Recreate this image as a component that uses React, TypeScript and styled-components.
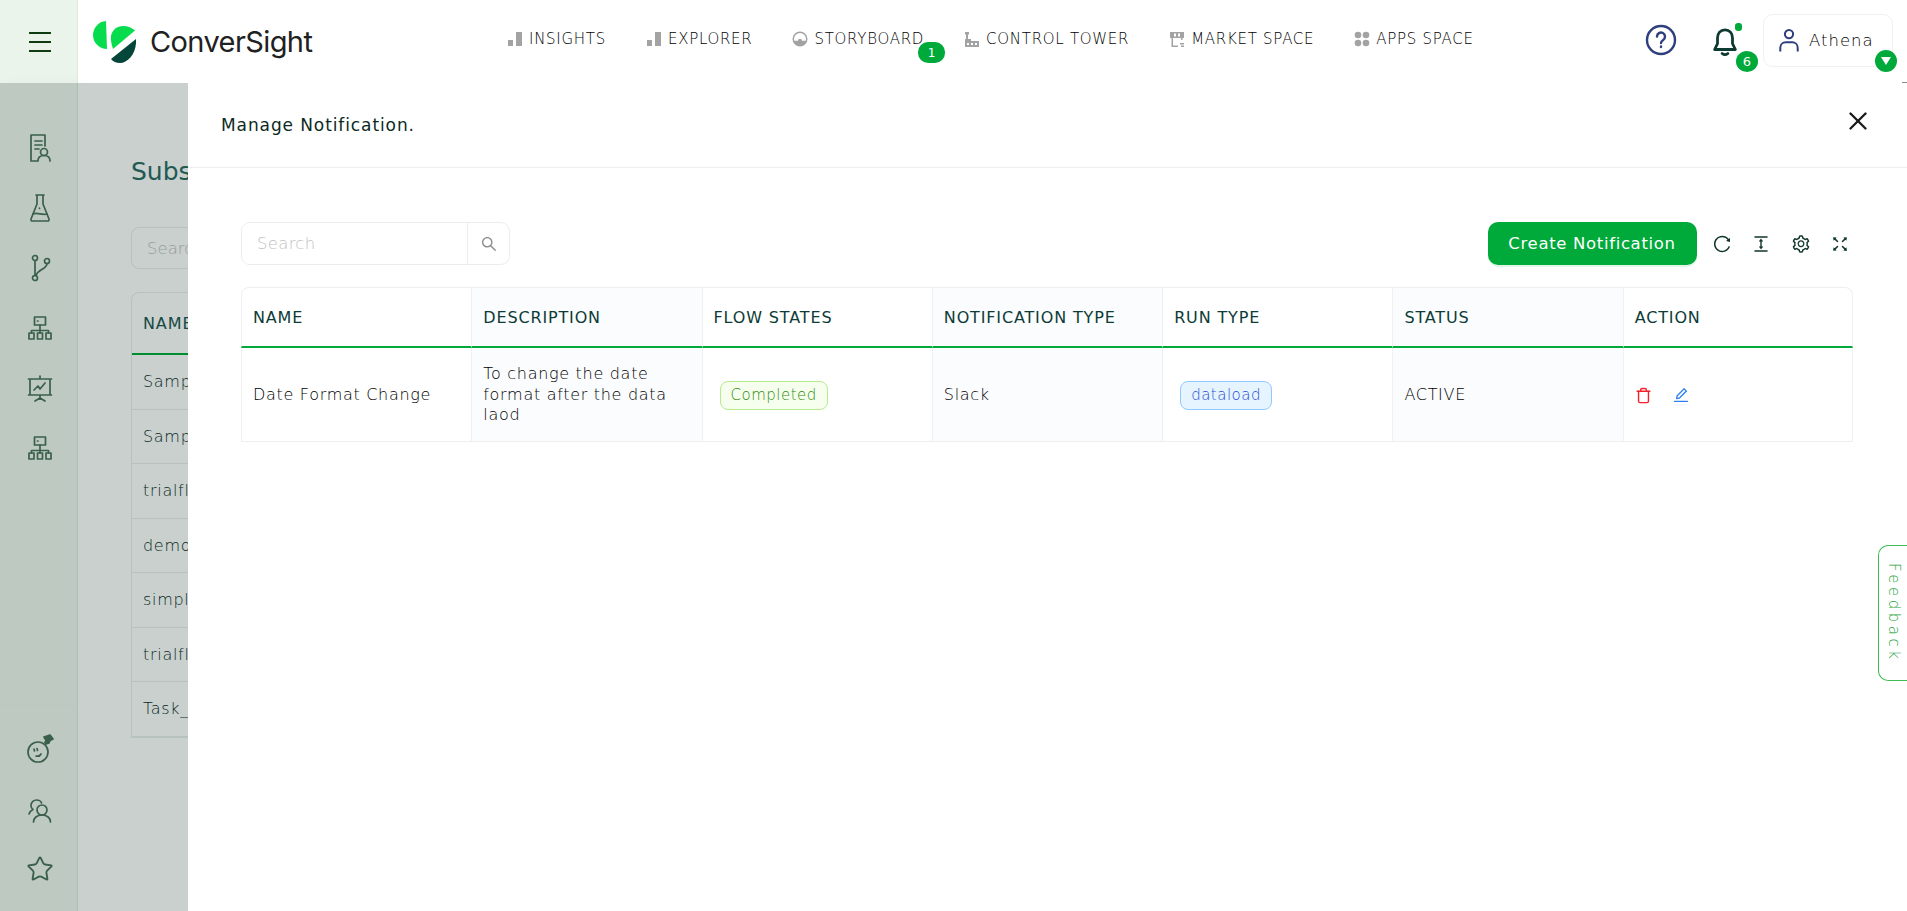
import React from "react";
import styled, { createGlobalStyle } from "styled-components";
import { AiOutlineReload, AiOutlineColumnHeight, AiOutlineSetting, AiOutlineFullscreen, AiOutlineSearch, AiOutlineEdit } from "react-icons/ai";
import { Trash, X, Star } from "lucide-react";

const GlobalStyle = createGlobalStyle`
  html, body {
    margin: 0;
    height: 100%;
    background: #fff;
    font-family: "DejaVu Sans", Inter, sans-serif;
    color: #0d3b36;
  }
  #root { height: 100%; }
  * { box-sizing: border-box; }
`;

const navItems = [
  { label: "INSIGHTS", icon: "bars" },
  { label: "EXPLORER", icon: "bars" },
  { label: "STORYBOARD", icon: "gauge", badge: "1" },
  { label: "CONTROL TOWER", icon: "tower" },
  { label: "MARKET SPACE", icon: "market" },
  { label: "APPS SPACE", icon: "apps" },
];

const columns = ["NAME", "DESCRIPTION", "FLOW STATES", "NOTIFICATION TYPE", "RUN TYPE", "STATUS", "ACTION"];
const backRows = ["Sample_flow", "Sample_flow_2", "trialflow", "demo_flow", "simple_flow", "trialflow_2", "Task_flow"];

const NavGlyph = ({ icon }: { icon: string }) => {
  if (icon === "bars") {
    return (
      <NavSvg viewBox="0 0 16 16">
        <rect x="1" y="9" width="5" height="6" />
        <rect x="9" y="1" width="6" height="14" />
      </NavSvg>
    );
  }
  if (icon === "gauge") {
    return (
      <NavSvg viewBox="0 0 16 16">
        <path fillRule="evenodd" d="M8 0.5a7.5 7.5 0 1 0 0 15a7.5 7.5 0 0 0 0-15zM8 2a6 6 0 0 1 6 6c0 .6-.1 1.2-.3 1.7H10a2 2 0 0 0-4 0H2.3A6 6 0 0 1 2 8a6 6 0 0 1 6-6z" />
      </NavSvg>
    );
  }
  if (icon === "tower") {
    return (
      <NavSvg viewBox="0 0 16 16">
        <path d="M1 1h4v2.5H4V8h3v2h8v6H1V8h1V3.500H1z" />
        <rect x="3" y="12" width="2" height="2" fill="#fff" />
        <rect x="7" y="12" width="2" height="2" fill="#fff" />
        <rect x="11" y="12" width="2" height="2" fill="#fff" />
      </NavSvg>
    );
  }
  if (icon === "market") {
    return (
      <NavSvg viewBox="0 0 16 16">
        <path d="M1 1h14v6h-1.500v2H12V7H4v7.500h5V16H2.500V7H1zM5 2.500v3h2v-3zM9 2.500v3h2v-3z" fillRule="evenodd" />
        <rect x="11" y="12" width="4" height="1.500" />
        <rect x="12" y="14.500" width="3" height="1.500" />
      </NavSvg>
    );
  }
  return (
    <NavSvg viewBox="0 0 16 16">
      <circle cx="4" cy="4" r="3.300" />
      <circle cx="12" cy="4" r="3.300" />
      <circle cx="4" cy="12" r="3.300" />
      <circle cx="12" cy="12" r="3.300" />
    </NavSvg>
  );
};

const Logo = () => (
  <LogoMark viewBox="0 0 46 44">
    <path d="M16 1 A14.020 14.020 0 0 0 17 29 Z" fill="#07dc4f" />
    <path d="M21 16 C22 10 27 6 33 6 C38 6 42 8 45 10.500 L23 29 C21.500 24 20.500 20 21 16 Z" fill="#07dc4f" />
    <path d="M46 19 C47 33 38 43 30 43 C26 43 23 41.500 21 39 Z" fill="#04473a" />
  </LogoMark>
);

const App = () => {
  return (
    <Page>
      <GlobalStyle />
      <TopBar>
        <BurgerCell>
          <BurgerLine />
          <BurgerLine />
          <BurgerLine />
        </BurgerCell>
        <LogoBox>
          <Logo />
          <LogoText>ConverSight</LogoText>
        </LogoBox>
        <Nav>
          {navItems.map((item) => (
            <NavItem key={item.label}>
              <NavGlyph icon={item.icon} />
              <NavLabel>{item.label}</NavLabel>
              {item.badge && <NavBadge>{item.badge}</NavBadge>}
            </NavItem>
          ))}
        </Nav>
        <RightGroup>
          <HelpSvg viewBox="0 0 32 32">
            <circle cx="16" cy="16" r="14" />
            <path d="M12 12.500a4 4 0 1 1 6.200 3.400c-1.400.9-2.200 1.700-2.200 3.100" />
            <path d="M16 22.500v.5" />
          </HelpSvg>
          <BellBox>
            <BellSvg viewBox="0 0 24 26">
              <path d="M12 2.500c-4 0-6.500 3-6.500 7v5L3 19.500h18l-2.500-5v-5c0-4-2.500-7-6.500-7z" />
              <path d="M9.500 23c1.500 1.200 3.500 1.200 5 0" />
            </BellSvg>
            <BellDot />
            <BellBadge>6</BellBadge>
          </BellBox>
          <UserBox>
            <UserSvg viewBox="0 0 24 28">
              <circle cx="12" cy="7" r="4.500" />
              <path d="M2.500 26v-4c0-3.500 2.500-6 6-6h7c3.500 0 6 2.500 6 6v4" />
            </UserSvg>
            <UserName>Athena</UserName>
            <UserCaret>
              <CaretTriangle />
            </UserCaret>
          </UserBox>
        </RightGroup>
      </TopBar>

      <Body>
        <Sidebar>
          <SideGroup>
            <SideSvg viewBox="0 0 24 30">
              <path d="M17 13V2H3v26h6" />
              <path d="M7 8h7M7 12h7M7 16h4" />
              <circle cx="16" cy="19" r="3.500" />
              <path d="M10 28c0-3.500 2.500-5.500 6-5.500s6 2 6 5.500" />
            </SideSvg>
            <SideSvg viewBox="0 0 24 30">
              <path d="M8 2h8M9 2v9L3 26a1.500 1.500 0 0 0 1.500 2h15a1.500 1.500 0 0 0 1.500-2l-6-15V2" />
              <path d="M5 21c4-2 9 1.500 14 0" />
              <path d="M11.500 15v.5" />
            </SideSvg>
            <SideSvg viewBox="0 0 24 30">
              <circle cx="7" cy="5" r="2.500" />
              <circle cx="7" cy="25" r="2.500" />
              <circle cx="19" cy="8" r="2.500" />
              <path d="M7 7.500v15M19 10.500c0 6-9 5-11 12" />
            </SideSvg>
            <NetworkIcon />
            <SideSvg viewBox="0 0 30 30">
              <path d="M15 3v3M3.500 6h23M5 6v16h20V6H5zM3.500 22h23M15 22v3M10 28l5-3 5 3" />
              <path d="M9 17l4-4 2 3 5-6" />
            </SideSvg>
            <NetworkIcon />
          </SideGroup>
          <SideGroupBottom>
            <SideSvg viewBox="0 0 30 30">
              <circle cx="13" cy="18" r="10" />
              <path d="M9 15l.5 2M12 14.500l.5 2M11 22c2 .5 4 0 5-2" />
              <path d="M19 3l6-2 3 4-6 3z" fill="currentColor" />
              <path d="M20 8l5-2-1 3-3 1z" fill="currentColor" />
            </SideSvg>
            <SideSvg viewBox="0 0 30 30">
              <path d="M4 20c.5-2 2-3.500 4-4.500-1.500-1-2-2.500-2-4C6 8 9 6 11.500 6 14 6 16 7.500 16.500 9" />
              <circle cx="17" cy="16" r="5" />
              <path d="M8.500 28c0-4 3.500-7 8.500-7s8.500 3 8.500 7" />
            </SideSvg>
            <SideStar as={Star} />
          </SideGroupBottom>
        </Sidebar>

        <Main>
          <BackTitle>Subscriptions</BackTitle>
          <BackSearch>Search</BackSearch>
          <BackTable>
            <BackHead>NAME</BackHead>
            {backRows.map((row) => (
              <BackRow key={row}>{row}</BackRow>
            ))}
          </BackTable>
        </Main>
      </Body>

      <Overlay />

      <Drawer>
        <DrawerHeader>
          <DrawerTitle>Manage Notification.</DrawerTitle>
          <CloseButton>
            <X size={30} strokeWidth={1.9} />
          </CloseButton>
        </DrawerHeader>
        <DrawerBody>
          <Toolbar>
            <SearchBox>
              <SearchInput placeholder="Search" />
              <SearchAddon>
                <AiOutlineSearch size={18} />
              </SearchAddon>
            </SearchBox>
            <ToolActions>
              <CreateButton>Create Notification</CreateButton>
              <ToolIcons>
                <AiOutlineReload size={20} />
                <AiOutlineColumnHeight size={20} />
                <AiOutlineSetting size={20} />
                <AiOutlineFullscreen size={20} />
              </ToolIcons>
            </ToolActions>
          </Toolbar>
          <Table>
            <thead>
              <tr>
                {columns.map((col) => (
                  <HeadCell key={col}>{col}</HeadCell>
                ))}
              </tr>
            </thead>
            <tbody>
              <tr>
                <BodyCell>Date Format Change</BodyCell>
                <BodyCell>To change the date format after the data laod</BodyCell>
                <BodyCell>
                  <Tag $kind="green">Completed</Tag>
                </BodyCell>
                <BodyCell>Slack</BodyCell>
                <BodyCell>
                  <Tag $kind="blue">dataload</Tag>
                </BodyCell>
                <BodyCell>ACTIVE</BodyCell>
                <BodyCell>
                  <ActionRow>
                    <TrashIcon as={Trash} />
                    <EditIcon as={AiOutlineEdit} />
                  </ActionRow>
                </BodyCell>
              </tr>
            </tbody>
          </Table>
        </DrawerBody>
      </Drawer>

      <Feedback>Feedback</Feedback>
      <CornerDash />
    </Page>
  );
};

const NetworkIcon = () => (
  <SideSvg viewBox="0 0 30 30">
    <rect x="9.500" y="4" width="11" height="8" />
    <path d="M12.500 8h.5M15 12v6M6.500 20v-2.500h17V20M15 17.500V20" />
    <rect x="4" y="20" width="5" height="6" />
    <rect x="12.500" y="20" width="5" height="6" />
    <rect x="21" y="20" width="5" height="6" />
  </SideSvg>
);

const Page = styled.div`
  height: 100vh;
  display: flex;
  flex-direction: column;
  overflow: hidden;
`;

const TopBar = styled.header`
  height: 83px;
  flex: none;
  display: flex;
  align-items: stretch;
  background: #fff;
`;

const BurgerCell = styled.div`
  width: 78px;
  flex: none;
  background: #eaf4ea;
  border-right: 1px solid #dfeadf;
  display: flex;
  flex-direction: column;
  align-items: center;
  justify-content: center;
  gap: 7px;
  padding-left: 2px;
`;

const BurgerLine = styled.span`
  width: 22px;
  height: 2px;
  background: #0f3d0f;
`;

const LogoBox = styled.div`
  width: 350px;
  flex: none;
  display: flex;
  align-items: center;
  padding-left: 12px;
`;

const LogoMark = styled.svg`
  width: 46px;
  height: 44px;
  flex: none;
`;

const LogoText = styled.span`
  margin-left: 14px;
  font-family: Inter, sans-serif;
  font-size: 29px;
  font-weight: 400;
  letter-spacing: -0.6px;
  color: #212121;
`;

const Nav = styled.nav`
  display: flex;
  align-items: center;
  gap: 40px;
  padding: 0 0 5px 79px;
`;

const NavItem = styled.div`
  position: relative;
  display: flex;
  align-items: center;
  gap: 6px;
`;

const NavSvg = styled.svg`
  width: 16px;
  height: 16px;
  flex: none;
  fill: #a3a3a3;
`;

const NavLabel = styled.span`
  font-size: 15px;
  font-weight: 200;
  letter-spacing: 0.72px;
  white-space: nowrap;
  color: #000;
`;

const NavBadge = styled.span`
  position: absolute;
  right: -21px;
  top: 12px;
  width: 27px;
  height: 21px;
  border-radius: 10px;
  background: #00aa3a;
  color: #fff;
  font-size: 12px;
  display: flex;
  align-items: center;
  justify-content: center;
`;

const RightGroup = styled.div`
  margin-left: auto;
  display: flex;
  align-items: center;
  padding-right: 14px;
`;

const HelpSvg = styled.svg`
  width: 32px;
  height: 32px;
  margin-right: 32px;
  margin-top: -3px;
  fill: none;
  stroke: #2f3e7c;
  stroke-width: 2.4;
  stroke-linecap: round;
`;

const BellBox = styled.div`
  position: relative;
  width: 32px;
  height: 36px;
  margin-right: 22px;
  display: flex;
  align-items: center;
  justify-content: center;
`;

const BellSvg = styled.svg`
  width: 28px;
  height: 30px;
  fill: none;
  stroke: #0c3a30;
  stroke-width: 2.4;
  stroke-linejoin: round;
  stroke-linecap: round;
`;

const BellDot = styled.span`
  position: absolute;
  top: -1px;
  right: -1px;
  width: 7px;
  height: 8px;
  border-radius: 3px;
  background: #00aa3a;
`;

const BellBadge = styled.span`
  position: absolute;
  top: 27px;
  right: -17px;
  width: 22px;
  height: 21px;
  border-radius: 50%;
  background: #00aa3a;
  color: #fff;
  font-size: 13px;
  display: flex;
  align-items: center;
  justify-content: center;
`;

const UserBox = styled.div`
  position: relative;
  width: 130px;
  height: 53px;
  margin-top: -2px;
  border: 1px solid #f0f0f0;
  border-radius: 10px;
  display: flex;
  align-items: center;
  padding-left: 14px;
  gap: 9px;
`;

const UserSvg = styled.svg`
  width: 22px;
  height: 27px;
  fill: none;
  stroke: #2f3e7c;
  stroke-width: 2.2;
`;

const UserName = styled.span`
  font-size: 16.5px;
  font-weight: 200;
  letter-spacing: 1px;
  color: #000;
`;

const UserCaret = styled.span`
  position: absolute;
  right: -5px;
  bottom: -6px;
  width: 22px;
  height: 22px;
  border-radius: 50%;
  background: #00aa3a;
  display: flex;
  align-items: center;
  justify-content: center;
`;

const CaretTriangle = styled.span`
  width: 0;
  height: 0;
  border-left: 5px solid transparent;
  border-right: 5px solid transparent;
  border-top: 8px solid #fff;
`;

const Body = styled.div`
  flex: 1;
  display: flex;
  min-height: 0;
`;

const Sidebar = styled.aside`
  width: 78px;
  flex: none;
  background: #f1f8ef;
  border-right: 1px solid #dfe9e0;
  box-shadow: 6px 0 14px rgba(0, 0, 0, 0.03);
  display: flex;
  flex-direction: column;
  justify-content: space-between;
  color: #4a7059;
`;

const SideGroup = styled.div`
  display: flex;
  flex-direction: column;
  align-items: center;
  gap: 30px;
  padding: 50px 0 0 2px;
`;

const SideGroupBottom = styled(SideGroup)`
  gap: 30px;
  padding: 28px 0 27px 2px;
  border-top: 1px solid #ecf4ea;
`;

const SideSvg = styled.svg`
  width: 30px;
  height: 30px;
  fill: none;
  stroke: currentColor;
  stroke-width: 1.7;
  stroke-linecap: round;
  stroke-linejoin: round;
`;

const SideStar = styled.svg`
  width: 28px;
  height: 30px;
  stroke-width: 1.6;
`;

const Main = styled.main`
  flex: 1;
  padding: 73px 0 0 53px;
  background: #fff;
  overflow: hidden;
`;

const BackTitle = styled.h2`
  margin: 0;
  font-size: 25px;
  font-weight: 400;
  line-height: 32px;
  color: #2c6a64;
`;

const BackSearch = styled.div`
  width: 300px;
  height: 42px;
  margin-top: 39px;
  border: 1px solid #e8ecea;
  border-radius: 8px;
  padding-left: 15px;
  display: flex;
  align-items: center;
  font-size: 16.5px;
  font-weight: 200;
  color: #c0c0c0;
`;

const BackTable = styled.div`
  width: 1000px;
  margin-top: 23px;
  border: 1px solid #eaeeec;
  border-radius: 8px 8px 0 0;
`;

const BackHead = styled.div`
  height: 62px;
  display: flex;
  align-items: center;
  padding-left: 11px;
  font-size: 16px;
  font-weight: 400;
  letter-spacing: 0.9px;
  color: #1d544f;
  border-bottom: 2px solid #00aa3a;
`;

const BackRow = styled.div`
  height: 54.500px;
  display: flex;
  align-items: center;
  padding-left: 11px;
  font-size: 16px;
  font-weight: 200;
  letter-spacing: 0.7px;
  color: #0c2a26;
  border-bottom: 1px solid #e9edeb;
`;

const Overlay = styled.div`
  position: fixed;
  top: 83px;
  left: 0;
  right: 0;
  bottom: 0;
  background: rgba(0, 33, 24, 0.212);
`;

const Drawer = styled.section`
  position: fixed;
  top: 83px;
  left: 188px;
  right: 0;
  bottom: 0;
  background: #fff;
  display: flex;
  flex-direction: column;
`;

const DrawerHeader = styled.div`
  height: 85px;
  flex: none;
  border-bottom: 1px solid #eee;
  display: flex;
  align-items: center;
  justify-content: space-between;
  padding: 0 34px 0 33px;
`;

const DrawerTitle = styled.h3`
  margin: 0;
  font-size: 17px;
  font-weight: 400;
  letter-spacing: 0.9px;
  color: #0c2a1e;
`;

const CloseButton = styled.span`
  display: flex;
  margin-bottom: 9px;
  color: #1a1a1a;
`;

const DrawerBody = styled.div`
  flex: 1;
  padding: 54px 54px 0 53px;
`;

const Toolbar = styled.div`
  height: 43px;
  display: flex;
  align-items: center;
  justify-content: space-between;
  margin-bottom: 22px;
`;

const SearchBox = styled.div`
  width: 269px;
  height: 43px;
  display: flex;
  border: 1px solid #ececec;
  border-radius: 9px;
  overflow: hidden;
`;

const SearchInput = styled.input`
  flex: 1;
  min-width: 0;
  border: 0;
  outline: 0;
  padding: 0 15px;
  font: 200 16.5px "DejaVu Sans", sans-serif;
  letter-spacing: 0.3px;
  &::placeholder {
    color: #bfbfbf;
  }
`;

const SearchAddon = styled.span`
  width: 42px;
  flex: none;
  border-left: 1px solid #ececec;
  display: flex;
  align-items: center;
  justify-content: center;
  color: #8a8a8a;
`;

const ToolActions = styled.div`
  display: flex;
  align-items: center;
`;

const CreateButton = styled.button`
  width: 209px;
  height: 43px;
  border: 0;
  border-radius: 10px;
  background: #00aa3a;
  box-shadow: 0 2px 0 rgba(0, 170, 58, 0.12);
  color: #fff;
  font: 400 16.5px "DejaVu Sans", sans-serif;
  letter-spacing: 0.66px;
`;

const ToolIcons = styled.div`
  display: flex;
  align-items: center;
  gap: 19.5px;
  margin-left: 15px;
  padding-right: 3px;
  color: #10362a;
`;

const Table = styled.table`
  width: 100%;
  table-layout: fixed;
  border-collapse: separate;
  border-spacing: 0;
`;

const HeadCell = styled.th`
  height: 61px;
  padding: 0 11px;
  text-align: left;
  font-size: 16px;
  font-weight: 400;
  letter-spacing: 0.85px;
  white-space: nowrap;
  color: #0d3b36;
  border-top: 1px solid #eee;
  border-left: 1px solid #f0f0f0;
  border-bottom: 2px solid #00aa3a;
  &:nth-child(even) {
    background: #fbfcfe;
  }
  &:first-child {
    border-top-left-radius: 8px;
  }
  &:last-child {
    border-top-right-radius: 8px;
    border-right: 1px solid #f0f0f0;
  }
`;

const BodyCell = styled.td`
  height: 94px;
  padding: 1px 11px 0;
  font-size: 16px;
  font-weight: 200;
  letter-spacing: 0.7px;
  line-height: 20.5px;
  color: #000;
  border-left: 1px solid #f0f0f0;
  border-bottom: 1px solid #eee;
  &:nth-child(even) {
    background: #fbfcfe;
  }
  &:last-child {
    border-right: 1px solid #f0f0f0;
  }
`;

const Tag = styled.span<{ $kind: "green" | "blue" }>`
  display: inline-flex;
  align-items: center;
  height: 29px;
  margin-left: 6px;
  padding: 0 10px;
  border-radius: 8px;
  font-size: 15px;
  font-weight: 200;
  letter-spacing: 0.5px;
  border: 1px solid ${({ $kind }) => ($kind === "green" ? "#b7eb8f" : "#91caff")};
  background: ${({ $kind }) => ($kind === "green" ? "#f6ffed" : "#e6f4ff")};
  color: ${({ $kind }) => ($kind === "green" ? "#2f8a0a" : "#1f4fd8")};
`;

const ActionRow = styled.div`
  display: flex;
  align-items: center;
  gap: 20px;
`;

const TrashIcon = styled.svg`
  width: 17px;
  height: 17px;
  color: #f5222d;
  stroke-width: 2;
`;

const EditIcon = styled.svg`
  width: 18px;
  height: 18px;
  color: #2f80ed;
`;

const Feedback = styled.div`
  position: fixed;
  top: 545px;
  right: 0;
  width: 29px;
  height: 136px;
  padding-left: 2px;
  border: 1px solid #3dbb55;
  border-right: 0;
  border-radius: 10px 0 0 10px;
  background: #fff;
  display: flex;
  align-items: center;
  justify-content: center;
  writing-mode: vertical-rl;
  font-size: 15px;
  font-weight: 200;
  letter-spacing: 3.5px;
  color: #1c9f38;
`;

const CornerDash = styled.span`
  position: fixed;
  top: 82px;
  right: 0;
  width: 5px;
  height: 1px;
  background: #8a8a8a;
`;

export default App;
